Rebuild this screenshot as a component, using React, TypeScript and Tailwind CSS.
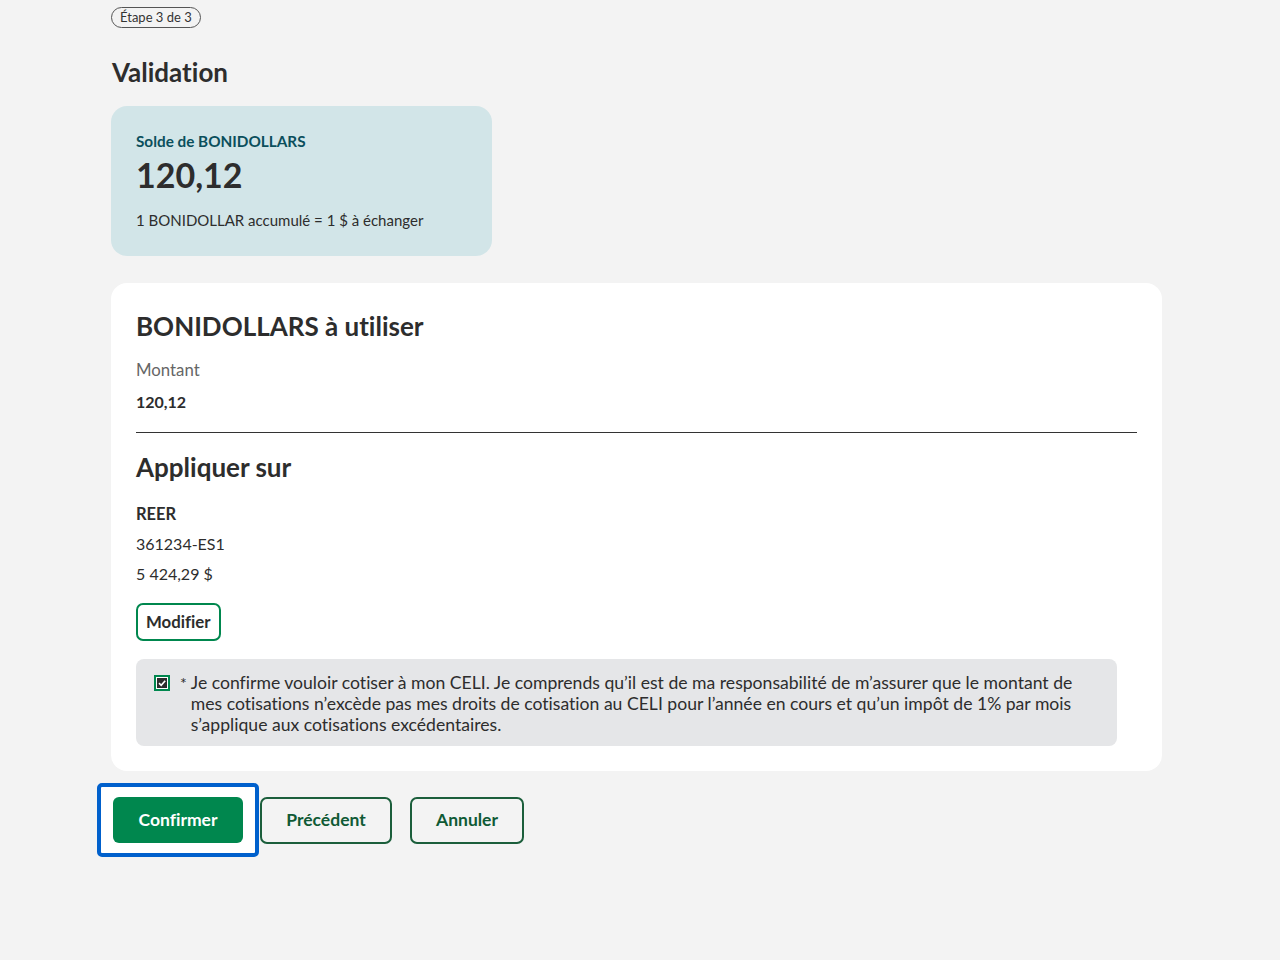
import React from "react";

export default function App() {
  return (
    <div
      className="min-h-[960px] w-full bg-[#f3f3f3] text-[#2d2d2d] [font-variant-ligatures:none]"
      style={{ fontFamily: "Lato, 'Open Sans', sans-serif" }}
    >
      <div className="pl-[111px] pr-[118px] pt-[7px]">
        <div className="flex h-[21px] w-fit items-center rounded-full border border-[#555] px-[8px] text-[13px] leading-none text-[#333]">
          Étape 3 de 3
        </div>
        <h1 className="mt-[29px] pl-px text-[26px] font-bold leading-[30px] text-[#2d2d2d]">Validation</h1>

        <div className="mt-[19px] w-[381px] rounded-[16px] bg-[#d2e5e8] px-[25px] pb-[26px] pt-[26px]">
          <div className="text-[15.3px] font-bold leading-[18px] text-[#0b4f5c]">Solde de BONIDOLLARS</div>
          <div className="mt-[5px] text-[34px] font-bold leading-[40px] text-[#2d2d2d]">120,12</div>
          <div className="mt-[15px] text-[15px] leading-[20px] text-[#2d2d2d]">1 BONIDOLLAR accumulé = 1 $ à échanger</div>
        </div>

        <div className="mt-[27px] rounded-[16px] bg-white px-[25px] pb-[25px] pt-[28px]">
          <h2 className="text-[26px] font-bold leading-[30px]">BONIDOLLARS à utiliser</h2>
          <div className="mt-[18px] text-[16.8px] leading-[22px] text-[#666]">Montant</div>
          <div className="mt-[10px] text-[16px] font-bold leading-[22px]">120,12</div>
          <div className="mt-[19px] h-px bg-[#333]" />
          <h2 className="mt-[19px] text-[26px] font-bold leading-[30px]">Appliquer sur</h2>
          <div className="mt-[21px] text-[16.5px] font-bold leading-[22px]">REER</div>
          <div className="mt-[8px] text-[16px] leading-[22px]">361234-ES1</div>
          <div className="mt-[8px] text-[16px] leading-[22px]">5 424,29 $</div>
          <button className="mt-[18px] flex h-[38px] items-center rounded-[7px] border-2 border-[#00874e] px-[8px] text-[16.8px] font-bold text-[#2d2d2d]">
            Modifier
          </button>
          <div className="mt-[18px] mr-[20px] flex rounded-[8px] bg-[#e5e6e8] pb-[11px] pl-[18px] pr-[24px] pt-[13px]">
            <span className="mt-[3px] flex h-[16px] w-[16px] shrink-0 items-center justify-center border-2 border-[#00874e] bg-white">
              <svg viewBox="0 0 10 10" className="h-[10px] w-[10px]">
                <rect x="0" y="0" width="10" height="10" fill="#2d2d2d" />
                <path d="M2 5.2 L4.2 7.3 L8.2 2.8" stroke="white" strokeWidth="1.6" fill="none" />
              </svg>
            </span>
            <span className="ml-[10px] shrink-0 text-[16px] leading-[21px]">*</span>
            <p className="ml-[4px] text-[17.6px] leading-[21px] text-[#2d2d2d]">
              Je confirme vouloir cotiser à mon CELI. Je comprends qu’il est de ma responsabilité de m’assurer que le montant de mes cotisations n’excède pas mes droits de cotisation au CELI pour l’année en cours et qu’un impôt de 1% par mois s’applique aux cotisations excédentaires.
            </p>
          </div>
        </div>

        <div className="mt-[12px] flex items-center">
          <div className="ml-[-14px] rounded-[5px] border-[4px] border-[#0060cc] bg-white px-[12px] py-[10px]">
            <button className="flex h-[46px] w-[130px] items-center justify-center rounded-[6px] bg-[#00874e] text-[17.5px] font-bold text-white">
              Confirmer
            </button>
          </div>
          <button className="ml-px flex h-[47px] w-[132px] items-center justify-center rounded-[7px] border-2 border-[#1b5e3b] text-[17.5px] font-bold text-[#0f5a35]">
            Précédent
          </button>
          <button className="ml-[18px] flex h-[47px] w-[114px] items-center justify-center rounded-[7px] border-2 border-[#1b5e3b] text-[17.5px] font-bold text-[#0f5a35]">
            Annuler
          </button>
        </div>
      </div>
    </div>
  );
}
